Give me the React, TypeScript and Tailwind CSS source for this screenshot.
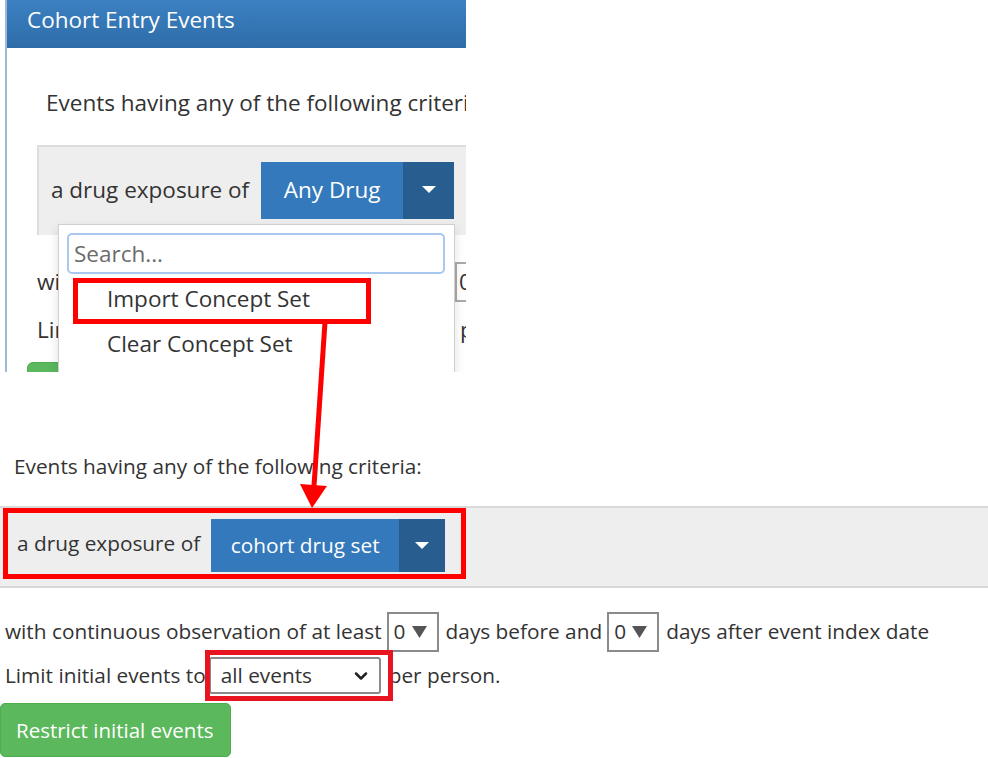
import { ChevronDown } from "lucide-react";

function Caret() {
  return (
    <svg width="14" height="8" viewBox="0 0 14 8">
      <path d="M0 0 L14 0 L7 7 Z" fill="#fff" />
    </svg>
  );
}

function SmallSelect() {
  return (
    <span className="inline-flex items-center shrink-0 h-[40px] w-[52px] border-2 border-[#8a8a8a] pl-[5px] gap-[6px] ml-[5px] mr-[7px]">
      <span>0</span>
      <svg width="15" height="12" viewBox="0 0 15 12">
        <path d="M0 0 L15 0 L7.5 12 Z" fill="#555" />
      </svg>
    </span>
  );
}

function TopPanel() {
  return (
    <div className="relative w-[466px] h-[372px] overflow-hidden text-[22.5px] text-[#333]">
      <div className="ml-[5px] h-full border-l-2 border-[#9fb8d3]">
        <div className="h-[48px] flex items-center pl-[20px] text-white bg-gradient-to-b from-[#3c81c3] to-[#2e6ca7] leading-none pb-[7px]">
          Cohort Entry Events
        </div>
        <div className="pl-[30px]">
          <div className="pl-[9px] mt-[39px] leading-[32px] whitespace-nowrap">
            Events having any of the following criteria:
          </div>
          <div className="mt-[26px] h-[90px] bg-[#eeeeee] border-t-2 border-l-2 border-[#dddddd] flex items-center pl-[12px] gap-[12px] whitespace-nowrap">
            <span className="pb-[2px]">a drug exposure of</span>
            <div className="flex h-[57px] mt-[-2px]">
              <div className="w-[142px] bg-[#3479bb] text-white flex items-center justify-center">Any Drug</div>
              <div className="w-[51px] bg-[#285e8f] flex items-center justify-center">
                <Caret />
              </div>
            </div>
          </div>
          <div className="flex items-center h-[48px] mt-[23px] whitespace-nowrap">
            <span className="w-[418px] shrink-0">with continuous observation</span>
            <span className="h-[40px] border-y-2 border-l-2 border-[#aaa] pl-[2px] flex items-center">0</span>
          </div>
          <div className="flex items-center h-[48px] whitespace-nowrap">
            <span className="w-[423px] shrink-0">Limit initial events</span>
            <span>per person.</span>
          </div>
          <div className="-ml-[10px] mt-[8px] w-[200px] h-[40px] rounded-t-[6px] bg-[#5cb85c] border border-[#4cae4c]" />
        </div>
      </div>
      <div className="absolute left-[58px] top-[224px] w-[397px] h-[170px] bg-white border border-[#d0d0d0] shadow-[0_4px_10px_rgba(0,0,0,0.12)]">
        <div className="mt-[8px] ml-[8px] w-[378px] h-[41px] border-2 border-[#a9c8f0] rounded-[5px] flex items-center pl-[5px] text-[#6b6b6b]">
          Search...
        </div>
        <div className="pl-[48px] mt-[2px] leading-[45px] text-[#333]">
          <div>Import Concept Set</div>
          <div>Clear Concept Set</div>
        </div>
      </div>
      <div className="absolute left-[73px] top-[278px] w-[298px] h-[46px] border-[5px] border-[#ff0000]" />
    </div>
  );
}

function BottomPanel() {
  return (
    <div className="relative text-[20.8px] text-[#333] whitespace-nowrap">
      <div className="pt-[80px] pl-[14px] leading-[28px]">Events having any of the following criteria:</div>
      <div className="mt-[26px] h-[82px] bg-[#eeeeee] border-y-2 border-[#d9d9d9] flex items-center pl-[17px] gap-[11px]">
        <span className="pb-[6px]">a drug exposure of</span>
        <div className="flex h-[53px] mt-[-3px]">
          <div className="w-[188px] bg-[#3479bb] text-white flex items-center justify-center">cohort drug set</div>
          <div className="w-[46px] bg-[#285e8f] flex items-center justify-center">
            <Caret />
          </div>
        </div>
      </div>
      <div className="mt-[24px] pl-[5px] flex items-center h-[40px]">
        <span>with continuous observation of at least</span>
        <SmallSelect />
        <span>days before and</span>
        <SmallSelect />
        <span>days after event index date</span>
      </div>
      <div className="mt-[5px] pl-[5px] flex items-center h-[37px]">
        <span>Limit initial events to</span>
        <span className="ml-[3px] inline-flex items-center justify-between h-[37px] w-[172px] border-2 border-[#8a8a8a] rounded-[3px] pl-[10px] pr-[8px]">
          <span>all events</span>
          <ChevronDown size={20} strokeWidth={3} color="#222" />
        </span>
        <span className="ml-[8px]">per person.</span>
      </div>
      <div className="mt-[9px] w-[231px] h-[54px] rounded-[5px] bg-[#5cb85c] border border-[#4cae4c] text-white flex items-center pl-[15px] text-[20.5px]">
        Restrict initial events
      </div>
      <div className="absolute left-[3px] top-[136px] w-[463px] h-[71px] border-[5px] border-[#ff0000]" />
      <div className="absolute left-[205px] top-[278px] w-[188px] h-[51px] border-[5px] border-[#e8141f]" />
    </div>
  );
}

export default function App() {
  return (
    <div className="relative w-[988px] h-[758px] overflow-hidden bg-white font-['Open_Sans',sans-serif]">
      <TopPanel />
      <BottomPanel />
      <svg className="absolute left-0 top-0 pointer-events-none" width="988" height="758">
        <line x1="325" y1="322" x2="314" y2="486" stroke="#ff0000" strokeWidth="5" />
        <path d="M300 484 L327 486 L312 508 Z" fill="#ff0000" />
      </svg>
    </div>
  );
}
